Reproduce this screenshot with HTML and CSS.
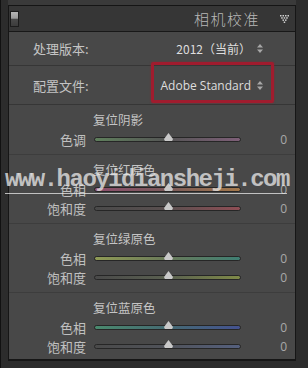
FILE: index.html
```html
<!DOCTYPE html>
<html lang="zh-CN">
<head>
  <meta charset="UTF-8" />
  <title>相机校准</title>
  <link rel="stylesheet" href="styles.css">
</head>
<body>
  <div class="frame">
    <div class="topbar"></div>
    <div class="panel">
      <div class="header">
        <span class="toggle"></span>
        <span class="title">相机校准</span>
        <svg class="collapse" width="9" height="8" viewBox="0 0 9 8">
          <g fill="#d0d0d0">
            <rect x="0" y="0" width="1.5" height="1.5"/><rect x="2.5" y="0" width="1.5" height="1.5"/>
            <rect x="5" y="0" width="1.5" height="1.5"/><rect x="7.5" y="0" width="1.5" height="1.5"/>
            <rect x="1.2" y="2.2" width="1.5" height="1.5"/><rect x="3.7" y="2.2" width="1.5" height="1.5"/>
            <rect x="6.2" y="2.2" width="1.5" height="1.5"/>
            <rect x="2.5" y="4.4" width="1.5" height="1.5"/><rect x="5" y="4.4" width="1.5" height="1.5"/>
            <rect x="3.7" y="6.5" width="1.5" height="1.5"/>
          </g>
        </svg>
      </div>

      <div class="select-row">
        <span class="select-label">处理版本:</span>
        <span class="select-value">2012（当前）
          <svg class="updown" width="6" height="9" viewBox="0 0 6 9"><path d="M3 0 L6 3.5 H0 Z M3 9 L0 5.5 H6 Z" fill="#a8a8a8"/></svg>
        </span>
      </div>

      <div class="select-row profile">
        <span class="select-label">配置文件:</span>
        <span class="select-value latin">Adobe Standard
          <svg class="updown" width="6" height="9" viewBox="0 0 6 9"><path d="M3 0 L6 3.5 H0 Z M3 9 L0 5.5 H6 Z" fill="#a8a8a8"/></svg>
        </span>
        <span class="highlight"></span>
      </div>

      <div class="group">
        <div class="group-title">复位阴影</div>
        <div class="slider-row">
          <span class="slider-label">色调</span>
          <span class="track tint"><span class="thumb"></span></span>
          <span class="slider-value">0</span>
        </div>
      </div>

      <div class="group">
        <div class="group-title">复位红原色</div>
        <div class="slider-row">
          <span class="slider-label">色相</span>
          <span class="track red-hue"><span class="thumb"></span></span>
          <span class="slider-value">0</span>
        </div>
        <div class="slider-row">
          <span class="slider-label">饱和度</span>
          <span class="track red-sat"><span class="thumb"></span></span>
          <span class="slider-value">0</span>
        </div>
      </div>

      <div class="group">
        <div class="group-title">复位绿原色</div>
        <div class="slider-row">
          <span class="slider-label">色相</span>
          <span class="track green-hue"><span class="thumb"></span></span>
          <span class="slider-value">0</span>
        </div>
        <div class="slider-row">
          <span class="slider-label">饱和度</span>
          <span class="track green-sat"><span class="thumb"></span></span>
          <span class="slider-value">0</span>
        </div>
      </div>

      <div class="group last">
        <div class="group-title">复位蓝原色</div>
        <div class="slider-row">
          <span class="slider-label">色相</span>
          <span class="track blue-hue"><span class="thumb"></span></span>
          <span class="slider-value">0</span>
        </div>
        <div class="slider-row">
          <span class="slider-label">饱和度</span>
          <span class="track blue-sat"><span class="thumb"></span></span>
          <span class="slider-value">0</span>
        </div>
      </div>
    </div>

    <div class="watermark">www.haoyidiansheji.com</div>
  </div>
</body>
</html>
```

FILE: styles.css
```css
body {
  margin: 0;
  background-color: #262626;
  font-family: "Noto Sans CJK SC", sans-serif;
}

.frame {
  position: relative;
  width: 308px;
  height: 368px;
  box-sizing: border-box;
  padding: 0 12px 0 7px;
  background-color: #2c2c2c;
  border-left: 1px solid #111;
  overflow: hidden;
}

.topbar {
  height: 5px;
  background-color: #3a3a3a;
  border-bottom: 1px solid #151515;
}

.panel {
  background-color: #484848;
  border-left: 1px solid #161616;
  border-right: 1px solid #161616;
  border-bottom: 2px solid #161616;
}

.header {
  display: flex;
  align-items: center;
  height: 25px;
  padding: 0 6px 0 1px;
  background-color: #363636;
  border-bottom: 1px solid #181818;
}

.toggle {
  width: 7px;
  height: 14px;
  border: 1px solid #1c1c1c;
  background: linear-gradient(#b5b5b5 0, #9a9a9a 45%, #4a4a4a 50%, #3c3c3c 100%);
}

.title {
  margin-left: auto;
  margin-right: 20px;
  font-size: 15px;
  font-weight: 300;
  letter-spacing: 1.5px;
  color: #b8b8b8;
}

.collapse {
  display: block;
}

.select-row {
  position: relative;
  display: flex;
  align-items: center;
  height: 33px;
  padding: 0 32px 0 24px;
  border-bottom: 1px solid #363636;
  color: #c4c4c4;
  font-size: 13px;
}

.select-row.profile {
  height: 38px;
}

.select-value {
  margin-left: auto;
  display: flex;
  align-items: center;
  gap: 6px;
  font-size: 12px;
  color: #dedede;
}

.select-value.latin {
  font-family: "Open Sans", sans-serif;
  font-size: 12px;
}

.updown {
  display: block;
}

.highlight {
  position: absolute;
  left: 142px;
  right: 21px;
  top: -4px;
  bottom: 1px;
  border: 3px solid #a01c2e;
  border-radius: 2px;
  box-shadow: 0 0 2px rgba(160, 28, 46, 0.7);
}

.group {
  padding: 5px 0 5px;
  border-bottom: 1px solid #3d3d3d;
}

.group.last {
  padding-bottom: 3px;
  border-bottom: none;
}

.group-title {
  height: 20px;
  line-height: 20px;
  padding-left: 84px;
  font-size: 12.5px;
  color: #c4c4c4;
}

.slider-row {
  display: flex;
  align-items: center;
  height: 19px;
}

.slider-label {
  width: 77px;
  text-align: right;
  font-size: 13px;
  color: #c0c0c0;
}

.track {
  position: relative;
  width: 145px;
  height: 3px;
  margin-left: 8px;
  border: 1px solid #262626;
  border-radius: 3px;
}

.thumb {
  position: absolute;
  left: 69px;
  top: -5px;
  width: 9px;
  height: 8px;
  background-color: #c9c9c9;
  clip-path: polygon(50% 0, 100% 75%, 90% 100%, 10% 100%, 0 75%);
}

.slider-value {
  margin-left: auto;
  margin-right: 8px;
  font-family: "Open Sans", sans-serif;
  font-size: 12px;
  color: #a8a8a8;
}

.tint { background: linear-gradient(90deg, #5f7f5c, #555 50%, #7e5f78); }
.red-hue { background: linear-gradient(90deg, #8e4f6e, #7a5a5a 50%, #a4784a); }
.red-sat { background: linear-gradient(90deg, #4a4a4a, #5a5050 50%, #8f4e55); }
.green-hue { background: linear-gradient(90deg, #8f9a55, #6a7a5a 50%, #3f7f73); }
.green-sat { background: linear-gradient(90deg, #4a4a4a, #5a6050 50%, #7f8a48); }
.blue-hue { background: linear-gradient(90deg, #4a8a6e, #456a72 50%, #445290); }
.blue-sat { background: linear-gradient(90deg, #4a4a4a, #50535a 50%, #55607e); }

.watermark {
  position: absolute;
  left: 4px;
  top: 167px;
  width: 282px;
  font-family: "Liberation Mono", monospace;
  font-weight: bold;
  font-size: 24px;
  letter-spacing: -1.5px;
  line-height: 26px;
  color: rgba(228, 228, 228, 0.8);
  border-bottom: 1px solid rgba(235, 235, 235, 0.75);
  white-space: nowrap;
}
```
